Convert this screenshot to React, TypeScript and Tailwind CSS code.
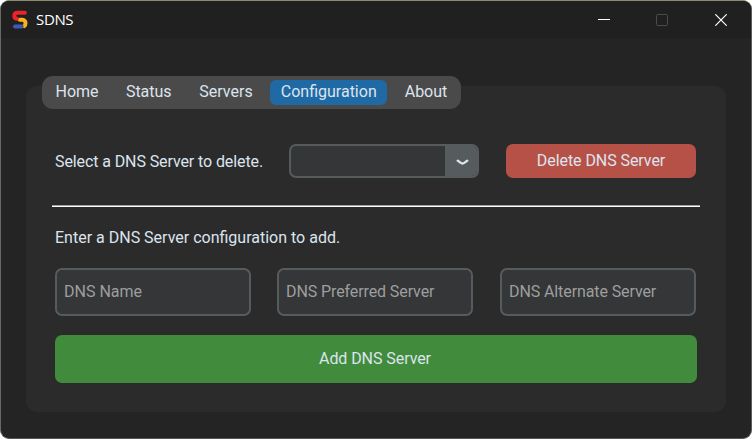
const tabs = [
  { label: 'Home', width: 'w-[62px]' },
  { label: 'Status', width: 'w-[66px]' },
  { label: 'Servers', width: 'w-[73px]' },
  { label: 'Configuration', width: 'w-[117px]', active: true },
  { label: 'About', width: 'w-[62px]' },
];

const fields = [
  { label: 'DNS Name', style: '' },
  { label: 'DNS Preferred Server', style: 'ml-[26px] tracking-[-0.1px]' },
  { label: 'DNS Alternate Server', style: 'ml-[27px] tracking-[-0.1px]' },
];

function Logo() {
  return (
    <svg width="18" height="20" viewBox="0 0 18 20" fill="none" strokeLinecap="round" strokeWidth="4">
      <path d="M8.8 9.8H11.6a3.1 3.1 0 0 1 2.9 3.1c0 1.6-.5 2.6-1.2 3.2" stroke="#fbb01f" />
      <path d="M4 16.5H10.6" stroke="#3c5bb5" />
      <path d="M13.8 2.8H6.3C2.4 2.8 2.4 8.2 5.8 8.8" stroke="#ee2329" />
    </svg>
  );
}

function TitleBar() {
  return (
    <header className="flex h-[37px] items-center bg-[#202020] pl-[10px]">
      <Logo />
      <span className="ml-[7px] pb-[2px] font-['Open_Sans',sans-serif] text-[15px] leading-5 tracking-[-0.35px] text-white">SDNS</span>
      <div className="ml-auto flex h-full items-center">
        <button aria-label="Minimize" className="flex h-full w-[58px] items-center justify-center">
          <svg width="12" height="12" viewBox="0 0 12 12"><path d="M0 5.5H12" stroke="#fff" /></svg>
        </button>
        <button aria-label="Maximize" className="flex h-full w-[58px] items-center justify-center">
          <svg width="12" height="12" viewBox="0 0 12 12"><rect x=".5" y=".5" width="11" height="11" rx="1" fill="none" stroke="#4c4c4c" /></svg>
        </button>
        <button aria-label="Close" className="flex h-full w-[60px] items-center justify-center">
          <svg width="12" height="12" viewBox="0 0 12 12"><path d="M.3.3 11.7 11.7M11.7.3.3 11.7" stroke="#fff" strokeWidth="1.2" /></svg>
        </button>
      </div>
    </header>
  );
}

export default function App() {
  return (
    <div className="h-[439px] w-[752px] bg-white font-[Roboto,sans-serif] text-[16px] leading-5 text-[#dce4ee]">
      <div className="h-full overflow-hidden rounded-[9px] border border-t-[#8f8972] border-r-[#5b5d5d] border-b-[#575757] border-l-[#626b66] bg-[#242424]">
        <TitleBar />
        <main className="mt-[48px] ml-[25px] flex h-[326px] w-[700px] flex-col rounded-[11px] bg-[#2b2b2b]">
          <nav className="-mt-[10px] ml-[16px] flex h-[33px] w-[419px] shrink-0 items-center justify-between rounded-[11px] bg-[#4a4a4a] px-1">
            {tabs.map((t) => (
              <button key={t.label} className={`${t.width} h-[25px] rounded-[6px] pb-[2px] text-center whitespace-nowrap ${t.active ? 'bg-[#1f6aa5]' : ''}`}>
                {t.label}
              </button>
            ))}
          </nav>
          <section className="mt-[35px] ml-[29px] flex h-[34px] w-[641px] shrink-0 items-center">
            <span className="w-[234px] pt-[2px] tracking-[-0.1px] whitespace-nowrap">Select a DNS Server to delete.</span>
            <div className="flex h-[34px] w-[190px] overflow-hidden rounded-[7px] border-2 border-[#565b5e] bg-[#343638]">
              <div className="flex-1" />
              <button aria-label="Open server list" className="flex w-[32px] items-center justify-center bg-[#565b5e] pl-[3px]">
                <svg width="13" height="7" viewBox="0 0 13 7" fill="none" className="mt-[3px]">
                  <path d="M1.7 1.6L4.4 3.7Q6.5 5.4 8.6 3.7L11.3 1.6" stroke="#dce4ee" strokeWidth="2.3" strokeLinecap="round" />
                </svg>
              </button>
            </div>
            <button className="ml-[27px] h-[34px] w-[190px] rounded-[7px] bg-[#b65148] tracking-[-0.07px]">Delete DNS Server</button>
          </section>
          <hr className="mt-[27px] ml-[26px] h-[2px] w-[648px] shrink-0 border-t border-b border-t-[#a0a0a0] border-b-white" />
          <p className="mt-[21px] ml-[29px]">Enter a DNS Server configuration to add.</p>
          <div className="mt-[20px] ml-[29px] flex w-[641px] shrink-0">
            {fields.map((f) => (
              <input
                key={f.label}
                placeholder={f.label}
                className={`h-[48px] w-[196px] rounded-[7px] border-2 border-[#565b5e] bg-[#343638] px-[7px] pb-[2px] outline-none placeholder:text-[#9e9e9e] ${f.style}`}
              />
            ))}
          </div>
          <button className="mt-[19px] ml-[29px] h-[48px] w-[642px] shrink-0 rounded-[7px] bg-[#418c3c] pr-[2px] pb-[1px] tracking-[-0.07px]">Add DNS Server</button>
        </main>
      </div>
    </div>
  );
}
